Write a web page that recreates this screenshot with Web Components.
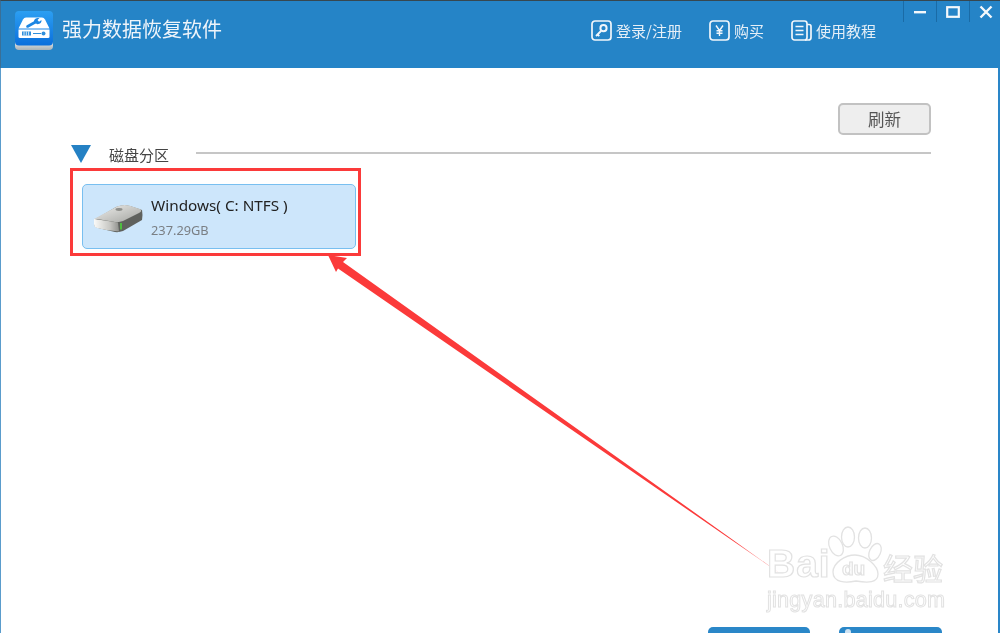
<!DOCTYPE html>
<html lang="zh">
<head>
<meta charset="utf-8">
<title>强力数据恢复软件</title>
<style>
  html, body { margin: 0; height: 100%; background: #fff; overflow: hidden; }
  body { font-family: "Noto Sans", "Noto Sans CJK SC", sans-serif; }
</style>
</head>
<body>

<recovery-app>
  <title-bar slot="top" heading="强力数据恢复软件">
    <nav-link label="登录/注册">
      <svg viewBox="0 0 21 21" width="21" height="21" fill="none" stroke="#f1f6fb" stroke-width="1.7">
        <rect x="1" y="1" width="19" height="19" rx="3"/>
        <circle cx="12.5" cy="8.2" r="3.1" stroke-width="2"/>
        <path d="M10 11 L5 16 M6.5 14.5 L8.3 16.2" stroke-width="1.8"/>
      </svg>
    </nav-link>
    <nav-link label="购买">
      <svg viewBox="0 0 21 21" width="21" height="21" fill="none" stroke="#f1f6fb" stroke-width="1.7">
        <rect x="1" y="1" width="19" height="19" rx="3"/>
        <path d="M7 5.5 L10.5 10.5 L14 5.5 M10.5 10.5 V16 M7.5 10.8 H13.5 M7.5 13.2 H13.5" stroke-width="1.4"/>
      </svg>
    </nav-link>
    <nav-link label="使用教程">
      <svg viewBox="0 0 21 21" width="21" height="21" fill="none" stroke="#f1f6fb" stroke-width="1.7">
        <rect x="1" y="1" width="15" height="19" rx="2.5"/>
        <path d="M16 4.5 H18 Q20 4.5 20 6.5 V17.5 Q20 20 17.5 20 H14" />
        <path d="M4.5 6.5 H12.5 M4.5 10.5 H12.5 M4.5 14.5 H12.5" stroke-width="1.3"/>
      </svg>
    </nav-link>
  </title-bar>

  <refresh-button>刷新</refresh-button>
  <section-head>磁盘分区</section-head>
  <volume-card name="Windows( C: NTFS )" size="237.29GB"></volume-card>
  <action-bar></action-bar>
  <photo-notes></photo-notes>
</recovery-app>

<script>
  class RecoveryApp extends HTMLElement {
    constructor() {
      super();
      this.attachShadow({ mode: 'open' }).innerHTML = `
        <style>
          :host {
            display: block;
            position: relative;
            width: 1000px;
            height: 633px;
            overflow: hidden;
            box-sizing: border-box;
            filter: blur(0.45px);
            background: #fff;
          }
          .body {
            height: 565px;
            box-sizing: border-box;
            padding: 35px 67px 0 70px;
            border-right: 2px solid #2a86c8;
            border-left: 1px solid #5a9ccc;
            display: flex;
            flex-direction: column;
          }
        </style>
        <slot name="top"></slot>
        <div class="body"><slot></slot></div>
      `;
    }
  }

  class TitleBar extends HTMLElement {
    constructor() {
      super();
      this.attachShadow({ mode: 'open' }).innerHTML = `
        <style>
          :host {
            display: flex;
            align-items: flex-start;
            height: 68px;
            box-sizing: border-box;
            background: #2584c7;
            border-top: 1px solid #37474f;
            border-left: 1px solid #3a6f96;
            color: #eef4fa;
          }
          .logo { margin: 10px 0 0 14px; flex: none; }
          h1 {
            margin: 14px 0 0 9px;
            font: 400 20px/28px "Noto Sans CJK SC", sans-serif;
            width: 160px;
            white-space: nowrap;
          }
          .nav {
            display: flex;
            gap: 27px;
            margin: 19px 0 0 369px;
          }
          .win {
            margin-left: 27px;
            display: flex;
          }
        </style>
        <svg class="logo" width="38" height="40" viewBox="0 0 38 40">
          <defs>
            <linearGradient id="lg" x1="0" y1="0" x2="0" y2="1">
              <stop offset="0" stop-color="#2c9ff2"/><stop offset="1" stop-color="#0a6fdc"/>
            </linearGradient>
            <linearGradient id="lb" x1="0" y1="0" x2="0" y2="1">
              <stop offset="0" stop-color="#eef2f4"/><stop offset="1" stop-color="#a9b1b6"/>
            </linearGradient>
          </defs>
          <path d="M0 29 H38 V35 Q38 39 34 39 H4 Q0 39 0 35 Z" fill="url(#lb)"/>
          <rect x="0" y="0" width="38" height="34.5" rx="4" fill="url(#lg)"/>
          <path d="M11 6.5 H27 Q29 6.5 30 8.5 L34.5 17.5 H3.5 L8 8.5 Q9 6.5 11 6.5 Z" fill="#fff"/>
          <path d="M3.5 18.5 H34.5 V26 Q34.5 27 33 27 H5 Q3.5 27 3.5 26 Z" fill="#fff"/>
          <path d="M12.5 15.5 L20.5 11" stroke="#1b86e4" stroke-width="2.6" stroke-linecap="round" fill="none"/>
          <path d="M19 11.5 Q18.5 7.5 22.5 7 L24.5 7 L22.5 9 L24 10.8 L26.5 9 Q26.8 13 22.5 13.2 Z" fill="#1b86e4"/>
          <rect x="7" y="20.5" width="9" height="4" fill="#2f8fdc"/>
          <path d="M9 20.5 V24.5 M11.3 20.5 V24.5 M13.6 20.5 V24.5" stroke="#fff" stroke-width="0.8"/>
          <circle cx="28.5" cy="22.5" r="2" fill="#2f8fdc"/>
          <path d="M18 22.5 H26" stroke="#2f8fdc" stroke-width="1"/>
        </svg>
        <h1>${this.getAttribute('heading')}</h1>
        <div class="nav"><slot></slot></div>
        <div class="win"><window-buttons></window-buttons></div>
      `;
    }
  }

  class NavLink extends HTMLElement {
    constructor() {
      super();
      this.attachShadow({ mode: 'open' }).innerHTML = `
        <style>
          :host {
            display: flex;
            align-items: center;
            gap: 4px;
            height: 21px;
            font: 400 15px/21px "Noto Sans CJK SC", sans-serif;
            color: #e6eff7;
            white-space: nowrap;
          }
          ::slotted(svg) { display: block; flex: none; }
          span { margin-top: -1px; }
        </style>
        <slot></slot><span>${this.getAttribute('label')}</span>
      `;
    }
  }

  class WindowButtons extends HTMLElement {
    constructor() {
      super();
      this.attachShadow({ mode: 'open' }).innerHTML = `
        <style>
          :host { display: flex; }
          div {
            width: 32px;
            height: 21px;
            border-left: 1px solid #1a6ba6;
            display: flex;
            align-items: center;
            justify-content: center;
          }
          svg { display: block; }
        </style>
        <div><svg width="14" height="14" viewBox="0 0 14 14"><rect x="1" y="6" width="12" height="2.4" fill="#f4f8fb"/></svg></div>
        <div><svg width="14" height="14" viewBox="0 0 14 14"><rect x="1.2" y="2.2" width="11.6" height="9.6" fill="none" stroke="#f4f8fb" stroke-width="2.2"/></svg></div>
        <div><svg width="14" height="14" viewBox="0 0 14 14"><path d="M1.5 1.5 L12.5 12.5 M12.5 1.5 L1.5 12.5" stroke="#f4f8fb" stroke-width="2.4"/></svg></div>
      `;
    }
  }

  class RefreshButton extends HTMLElement {
    constructor() {
      super();
      this.attachShadow({ mode: 'open' }).innerHTML = `
        <style>
          :host {
            display: flex;
            align-self: flex-end;
            align-items: center;
            justify-content: center;
            width: 93px;
            height: 32px;
            box-sizing: border-box;
            background: #eeeeee;
            border: 2px solid #c2c2c2;
            border-radius: 5px;
            font: 400 16.5px/20px "Noto Sans CJK SC", sans-serif;
            color: #555;
          }
        </style>
        <slot></slot>
      `;
    }
  }

  class SectionHead extends HTMLElement {
    constructor() {
      super();
      this.attachShadow({ mode: 'open' }).innerHTML = `
        <style>
          :host {
            display: flex;
            align-items: center;
            height: 20px;
            margin-top: 8px;
            font: 400 15px/20px "Noto Sans CJK SC", sans-serif;
            color: #444;
          }
          .tri {
            width: 0;
            height: 0;
            border-left: 10px solid transparent;
            border-right: 10px solid transparent;
            border-top: 18px solid #2581c4;
            margin-right: 18px;
            margin-top: 2px;
          }
          span { width: 60px; white-space: nowrap; margin-top: 4px; }
          i {
            flex: 1;
            height: 2px;
            margin-left: 27px;
            background: #c6c6c6;
          }
        </style>
        <div class="tri"></div><span><slot></slot></span><i></i>
      `;
    }
  }

  class VolumeCard extends HTMLElement {
    constructor() {
      super();
      this.attachShadow({ mode: 'open' }).innerHTML = `
        <style>
          :host {
            display: flex;
            align-items: center;
            width: 274px;
            height: 65px;
            box-sizing: border-box;
            margin: 21px 0 0 11px;
            padding-left: 10px;
            background: #cde6fb;
            border: 1px solid #78bff0;
            border-radius: 5px;
          }
          svg { display: block; flex: none; margin-top: 2px; }
          .txt { margin-left: 7px; margin-top: -1px; white-space: nowrap; }
          .n { font: 400 15.3px/22px "Noto Sans", sans-serif; color: #222; }
          .s { font: 400 12.8px/18px "Noto Sans", sans-serif; color: #7a7f84; margin-top: 5px; }
        </style>
        <svg width="51" height="30" viewBox="0 0 51 30">
          <defs>
            <linearGradient id="top" x1="0" y1="0" x2="1" y2="1">
              <stop offset="0" stop-color="#f0f0ee"/><stop offset="1" stop-color="#a3a4a0"/>
            </linearGradient>
            <linearGradient id="front" x1="0" y1="0" x2="1" y2="0">
              <stop offset="0" stop-color="#fafaf8"/><stop offset="0.65" stop-color="#c6c6c2"/><stop offset="1" stop-color="#8f908c"/>
            </linearGradient>
          </defs>
          <path d="M1 17 L23 4 Q30 1 37 3 L49 7 Q50 12 49 17 L30 28 Q26 29.5 22 29 L5 25 Q1 24 1 21 Z" fill="#5f615d"/>
          <path d="M1 16 L24 3.5 Q30 1 36 2.5 L47 6 Q50 8 46 10 L30 18 Q26 19.5 22 19 L4 16 Q1 17 1 16 Z" fill="url(#top)"/>
          <ellipse cx="26" cy="6.5" rx="3.5" ry="1.4" fill="#8d8e8a"/>
          <path d="M1 16 Q14 17.5 25 19.5 L26 28.5 Q15 28 4 25 Q1 24 1 21 Z" fill="url(#front)"/>
          <rect x="27" y="20" width="2" height="6.5" fill="#4ebd3f"/>
        </svg>
        <div class="txt">
          <div class="n">${this.getAttribute('name')}</div>
          <div class="s">${this.getAttribute('size')}</div>
        </div>
      `;
    }
  }

  class ActionBar extends HTMLElement {
    constructor() {
      super();
      this.attachShadow({ mode: 'open' }).innerHTML = `
        <style>
          :host {
            display: flex;
            justify-content: flex-end;
            gap: 29px;
            margin-top: auto;
            margin-right: -11px;
            height: 6px;
          }
          div {
            width: 102px;
            height: 20px;
            background: #2a87c8;
            border-radius: 5px;
          }
          div + div { width: 103px; }
          b {
            display: block;
            width: 6px;
            height: 6px;
            margin: 2px 0 0 6px;
            border-radius: 50%;
            background: #cfe3f3;
          }
        </style>
        <div></div><div><b></b></div>
      `;
    }
  }

  // red marker and the site watermark sit on top of the screenshot
  class PhotoNotes extends HTMLElement {
    constructor() {
      super();
      this.attachShadow({ mode: 'open' }).innerHTML = `
        <style>
          :host { position: absolute; inset: 0; pointer-events: none; display: block; }
          .box {
            position: absolute;
            left: 70px; top: 168px;
            width: 291px; height: 88px;
            box-sizing: border-box;
            border: 3px solid #fb3a3a;
          }
          svg { position: absolute; left: 0; top: 0; }
          .mark {
            position: absolute;
            color: #fff;
            -webkit-text-stroke: 1.2px #e2e2e2;
            white-space: nowrap;
          }
          .bai { left: 767px; top: 541px; font: 700 39px/46px "Liberation Sans", sans-serif; letter-spacing: 1px; }
          .du { left: 842px; top: 557px; font: 700 19px/24px "Liberation Sans", sans-serif; }
          .jy { left: 883px; top: 549px; font: 400 30px/36px "Noto Sans CJK SC", sans-serif; }
          .url { left: 767px; top: 586px; font: 400 21.6px/28px "Liberation Sans", sans-serif; letter-spacing: .25px; -webkit-text-stroke-width: 1px; }
        </style>
        <svg width="1000" height="633" viewBox="0 0 1000 633">
          <defs>
            <linearGradient id="fade" gradientUnits="userSpaceOnUse" x1="735" y1="541" x2="783" y2="575">
              <stop offset="0" stop-color="#fb3a3a"/><stop offset="1" stop-color="#fb3a3a" stop-opacity="0.2"/>
            </linearGradient>
          </defs>
          <path d="M328 255 L347 258 L343 262 L783 575.5 L338 268.5 L336 272 Z" fill="url(#fade)"/>
          <g fill="#fff" stroke="#e2e2e2" stroke-width="1.3">
            <ellipse cx="836" cy="546" rx="6.5" ry="10.5" transform="rotate(-25 836 546)"/>
            <ellipse cx="848" cy="537" rx="6.5" ry="10"/>
            <ellipse cx="865" cy="538" rx="6.5" ry="10"/>
            <ellipse cx="875" cy="552" rx="5.5" ry="9" transform="rotate(25 875 552)"/>
            <path d="M833 572 C833 563 845 555 855 555 C866 555 878 566 878 574 C878 583 868 583 856 581 C846 583 833 583 833 572 Z"/>
          </g>
        </svg>
        <div class="box"></div>
        <span class="mark bai">Bai</span>
        <span class="mark du">du</span>
        <span class="mark jy">经验</span>
        <span class="mark url">jingyan.baidu.com</span>
      `;
    }
  }

  customElements.define('recovery-app', RecoveryApp);
  customElements.define('title-bar', TitleBar);
  customElements.define('nav-link', NavLink);
  customElements.define('window-buttons', WindowButtons);
  customElements.define('refresh-button', RefreshButton);
  customElements.define('section-head', SectionHead);
  customElements.define('volume-card', VolumeCard);
  customElements.define('action-bar', ActionBar);
  customElements.define('photo-notes', PhotoNotes);
</script>
</body>
</html>
